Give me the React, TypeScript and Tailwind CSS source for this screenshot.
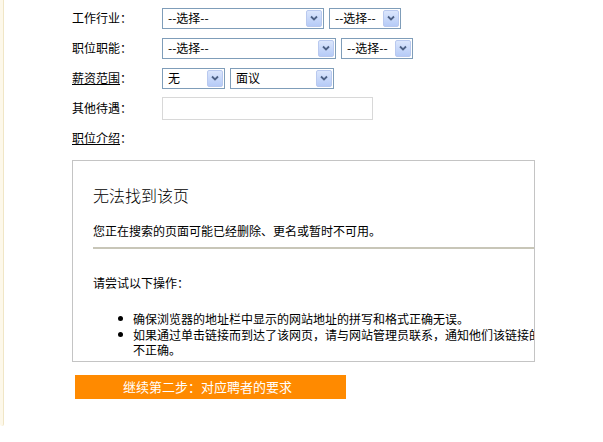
import React from 'react';

const font = { fontFamily: '"Noto Sans CJK SC", "Liberation Sans", sans-serif' };

const Select: React.FC<{ label: string; width: string }> = ({ label, width }) => (
    <div className={`${width} h-[21px] border border-[#7f9db9] bg-white flex items-center justify-between pl-[5px] pr-[1px]`}>
        <span className="text-[12px] leading-none text-black">{label}</span>
        <span className="w-[16px] h-[17px] flex items-center justify-center rounded-[2px] border border-[#b9c9ef] bg-gradient-to-b from-[#dbe6fc] to-[#b6cbf7]">
            <svg width="8" height="6" viewBox="0 0 8 6">
                <path d="M1 1.5 L4 4.5 L7 1.5" fill="none" stroke="#4d6185" strokeWidth="1.8" />
            </svg>
        </span>
    </div>
);

const Row: React.FC<{ label: string; link?: boolean; children?: React.ReactNode }> = ({ label, link, children }) => (
    <div className="h-[30px] flex items-center">
        <div className="w-[90px] text-[12px] text-black">
            <span className={link ? 'underline' : ''}>{label}</span>：
        </div>
        <div className="flex items-center gap-[5px]">{children}</div>
    </div>
);

const Bullet: React.FC<{ children: React.ReactNode }> = ({ children }) => (
    <li className="flex items-start">
        <span className="w-[15px] h-[15.5px] flex items-center">
            <span className="w-[5px] h-[5px] rounded-full bg-black" />
        </span>
        {children}
    </li>
);

export default function App() {
    return (
        <div className="w-[603px] h-[442px] bg-white flex" style={font}>
            <div className="w-[4px] h-[426px] bg-[#fdf8ea] border-r border-[#f0e6c6] rounded-b-[3px]" />
            <div className="pl-[68px] pt-[3px] flex flex-col">
                <Row label="工作行业">
                    <Select label="--选择--" width="w-[162px]" />
                    <Select label="--选择--" width="w-[72px]" />
                </Row>
                <Row label="职位职能">
                    <Select label="--选择--" width="w-[174px]" />
                    <Select label="--选择--" width="w-[72px]" />
                </Row>
                <Row label="薪资范围" link>
                    <Select label="无" width="w-[63px]" />
                    <Select label="面议" width="w-[104px]" />
                </Row>
                <Row label="其他待遇">
                    <div className="w-[211px] h-[23px] border border-[#d8d8d8] bg-white" />
                </Row>
                <Row label="职位介绍" link />

                <div className="mt-[7px] w-[463px] h-[202px] border border-[#c4c4c4] overflow-hidden bg-white">
                    <div className="w-[600px] pl-[20px] text-black">
                        <div className="mt-[23px] text-[16px] leading-[22px] font-light">无法找到该页</div>
                        <div className="mt-[17px] text-[12px] leading-[16px]">您正在搜索的页面可能已经删除、更名或暂时不可用。</div>
                        <div className="mt-[8px] border-t-2 border-[#c8c6b8]" />
                        <div className="mt-[26px] text-[12px] leading-[16px]">请尝试以下操作：</div>
                        <ul className="mt-[20px] pl-[25px] text-[12px] leading-[15.5px]">
                            <Bullet>
                                <span>确保浏览器的地址栏中显示的网站地址的拼写和格式正确无误。</span>
                            </Bullet>
                            <Bullet>
                                <span className="whitespace-nowrap">
                                    如果通过单击链接而到达了该网页，请与网站管理员联系，通知他们该链接的格式
                                    <br />
                                    不正确。
                                </span>
                            </Bullet>
                        </ul>
                    </div>
                </div>

                <div className="mt-[13px] ml-[3px] w-[271px] h-[24px] bg-[#ff8a00] flex items-center pl-[48px] text-white text-[13px]">
                    继续第二步：对应聘者的要求
                </div>
            </div>
        </div>
    );
}
